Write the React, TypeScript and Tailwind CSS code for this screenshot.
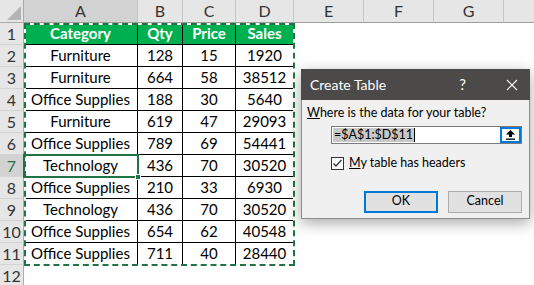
import { Fragment } from "react"

const rows: [string, number, number, number][] = [
  ["Furniture", 128, 15, 1920],
  ["Furniture", 664, 58, 38512],
  ["Office Supplies", 188, 30, 5640],
  ["Furniture", 619, 47, 29093],
  ["Office Supplies", 789, 69, 54441],
  ["Technology", 436, 70, 30520],
  ["Office Supplies", 210, 33, 6930],
  ["Technology", 436, 70, 30520],
  ["Office Supplies", 654, 62, 40548],
  ["Office Supplies", 711, 40, 28440],
]

const cols = ["A", "B", "C", "D", "E", "F", "G"]

export default function App() {
  return (
    <div className="relative w-[534px] h-[285px] overflow-hidden bg-white font-['Lato',sans-serif] text-[15px] text-black">
      <div className="grid grid-cols-[24px_114px_45px_53px_58px_70px_70px_70px_30px] grid-rows-[23px_repeat(12,22px)]">
        {/* Column headers */}
        <div className="relative bg-[#e6e6e6] border-r border-b border-[#ababab]">
          <div className="absolute right-[2px] bottom-[2px] w-0 h-0 border-l-[14px] border-l-transparent border-b-[14px] border-b-[#b4b4b4]"></div>
        </div>
        {cols.map((c) => (
          <div
            key={c}
            className={`flex items-center justify-center border-r border-b border-r-[#c6c6c6] border-b-[#9c9c9c] text-[#333] text-[16px] ${
              c === "A" ? "bg-[#d2d2d2]" : "bg-[#e6e6e6]"
            }`}
          >
            {c}
          </div>
        ))}
        <div className="bg-[#e6e6e6] border-b border-[#9c9c9c]"></div>

        {/* Row 1 */}
        <div className="flex items-center justify-center bg-[#e6e6e6] border-r border-b border-r-[#ababab] border-b-[#d4d4d4] text-[#333] text-[16px]">1</div>
        {["Category", "Qty", "Price", "Sales"].map((h) => (
          <div key={h} className="flex items-center justify-center bg-[#00b050] text-white font-bold border-r border-b border-black">
            {h}
          </div>
        ))}
        <div></div>
        <div></div>
        <div></div>
        <div></div>

        {rows.map((r, i) => (
          <Fragment key={i}>
            <div
              className={`flex items-center justify-center border-r border-b border-r-[#ababab] border-b-[#d4d4d4] text-[16px] ${
                i === 5 ? "bg-[#d2d2d2] text-[#217346]" : "bg-[#e6e6e6] text-[#333]"
              }`}
            >
              {i + 2}
            </div>
            {r.map((v, j) => (
              <div key={j} className="flex items-center justify-center border-r border-b border-black">
                {v}
              </div>
            ))}
            <div></div>
            <div></div>
            <div></div>
            <div></div>
          </Fragment>
        ))}

        <div className="flex items-center justify-center bg-[#e6e6e6] border-r border-[#ababab] text-[#333] text-[16px]">12</div>
      </div>

      {/* Copy range marching ants */}
      <div className="absolute left-[24px] top-[23px] w-[271px] h-[243px] border-2 border-white">
        <div className="absolute -inset-[2px] border-2 border-dashed border-[#217346]"></div>
      </div>

      {/* Active cell A7 */}
      <div className="absolute left-[23px] top-[154px] w-[116px] h-[24px] border-2 border-[#217346]">
        <div className="absolute -right-[4px] -bottom-[4px] w-[6px] h-[6px] bg-[#217346] border border-white"></div>
      </div>

      {/* Create Table dialog */}
      <div className="absolute left-[301px] top-[69px] w-[229px] h-[150px] flex flex-col shadow-[0_4px_14px_rgba(0,0,0,0.35)] font-['Lato',sans-serif] text-[12.5px]">
        <div className="h-[31px] bg-[#4b4a48] flex items-center text-white pl-[9px] pr-[12px]">
          <span className="text-[14px] flex-1">Create Table</span>
          <span className="text-[15px] mr-[40px]">?</span>
          <svg width="12" height="12" viewBox="0 0 12 12">
            <path d="M1 1L11 11M11 1L1 11" stroke="white" strokeWidth="1.2" />
          </svg>
        </div>
        <div className="flex-1 bg-[#f0f0f0] border border-t-0 border-[#8c8c8c] flex flex-col pl-[5px] pt-[4px]">
          <div className="leading-[18px]">
            <span className="underline">W</span>here is the data for your table?
          </div>
          <div className="ml-[24px] mt-[4px] w-[191px] h-[18px] bg-white border border-[#7a7a7a] flex items-center">
            <div className="flex-1 flex items-center pl-[1px]">
              <span className="bg-[#c8c8c8] leading-[14px] px-[1px]">=$A$1:$D$11</span>
              <span className="w-px h-[14px] bg-black"></span>
            </div>
            <div className="w-[21px] h-[16px] border-2 border-[#0078d7] bg-white flex items-center justify-center">
              <svg width="9" height="10" viewBox="0 0 9 10">
                <path d="M4.5 0L9 4.5H6V7H3V4.5H0Z" fill="black" />
                <rect x="0" y="8.5" width="9" height="1.3" fill="black" />
              </svg>
            </div>
          </div>
          <div className="ml-[24px] mt-[10px] flex items-center gap-[5px]">
            <div className="w-[13px] h-[13px] border border-[#333] bg-white flex items-center justify-center">
              <svg width="11" height="11" viewBox="0 0 11 11">
                <path d="M1.5 5.5L4 8L9.5 2" stroke="#333" strokeWidth="1.3" fill="none" />
              </svg>
            </div>
            <span>
              <span className="underline">M</span>y table has headers
            </span>
          </div>
          <div className="mt-[18px] ml-[57px] flex gap-[10px]">
            <div className="w-[74px] h-[22px] border-2 border-[#0078d7] bg-[#e1e1e1] flex items-center justify-center">OK</div>
            <div className="w-[74px] h-[22px] border border-[#adadad] bg-[#e1e1e1] flex items-center justify-center">Cancel</div>
          </div>
        </div>
      </div>
    </div>
  )
}
